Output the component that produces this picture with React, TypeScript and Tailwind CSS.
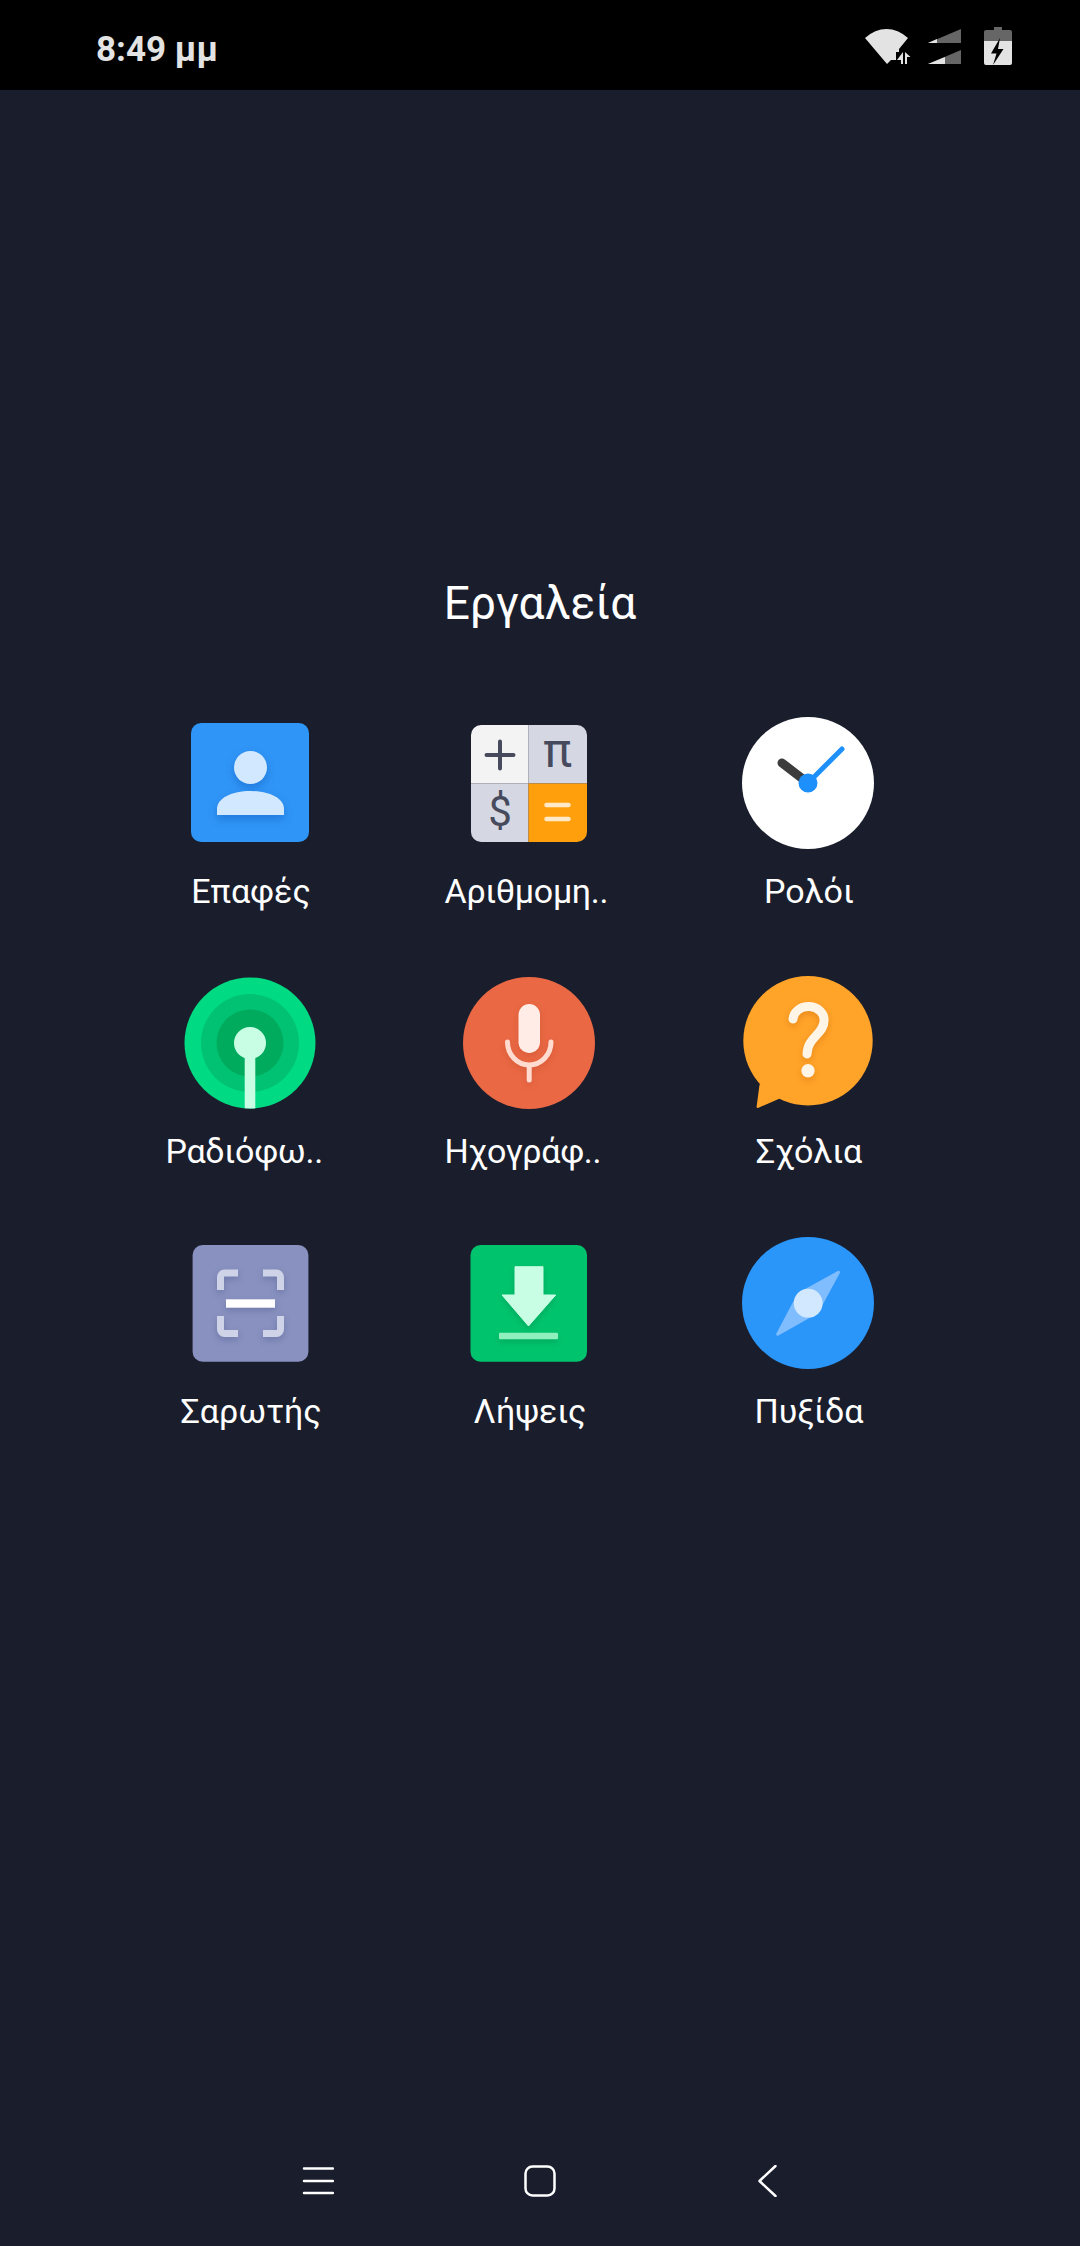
function ContactsIcon() {
  return (
    <svg width="132" height="132" viewBox="0 0 132 132">
      <rect x="7" y="6" width="118" height="119" rx="10" fill="#2f95f6" />
      <g className="drop-shadow-[0_4px_4px_rgba(0,60,160,0.3)]">
        <circle cx="66.5" cy="50.5" r="16.5" fill="#d2e8ff" />
        <path d="M33 98 V92 C33 81 48 74 66.5 74 S100 81 100 92 V98 Z" fill="#d2e8ff" />
      </g>
    </svg>
  );
}

function CalculatorIcon() {
  return (
    <svg width="132" height="132" viewBox="0 0 132 132">
      <path d="M65.5 8 H18 a10 10 0 0 0 -10 10 V66.5 H65.5 Z" fill="#f3f3f3" />
      <path d="M65.5 8 H114 a10 10 0 0 1 10 10 V66.5 H65.5 Z" fill="#d5d8e2" />
      <path d="M65.5 125 H18 a10 10 0 0 1 -10 -10 V66.5 H65.5 Z" fill="#d5d8e2" />
      <path d="M65.5 125 H114 a10 10 0 0 0 10 -10 V66.5 H65.5 Z" fill="#ff9f0c" />
      <path d="M23.5 38 H50.5 M37 24.5 V51.5" stroke="#464a5c" strokeWidth="4" strokeLinecap="round" />
      <text x="94.5" y="50" textAnchor="middle" fontSize="48" fontWeight="400" fill="#464a5c" className="font-['Roboto']">π</text>
      <text x="37" y="109" textAnchor="middle" fontSize="42" fontWeight="400" fill="#464a5c" className="font-['Roboto']">$</text>
      <path d="M83.5 88 H105.5 M83.5 102 H105.5" stroke="#ffe9c9" strokeWidth="4.5" strokeLinecap="round" />
    </svg>
  );
}

function ClockIcon() {
  return (
    <svg width="132" height="132" viewBox="0 0 132 132">
      <circle cx="66" cy="66" r="66" fill="#ffffff" />
      <path d="M66 66 L40 46" stroke="#3c3c3c" strokeWidth="9" strokeLinecap="round" />
      <path d="M66 66 L100 32" stroke="#1e90fb" strokeWidth="5" strokeLinecap="round" />
      <circle cx="66" cy="66" r="9.5" fill="#1e90fb" />
    </svg>
  );
}

function RadioIcon() {
  return (
    <svg width="132" height="132" viewBox="0 0 132 132">
      <defs>
        <clipPath id="radio-clip">
          <circle cx="66" cy="66" r="65.5" />
        </clipPath>
      </defs>
      <circle cx="66" cy="66" r="65.5" fill="#00da82" />
      <circle cx="66" cy="66" r="49" fill="#00c272" />
      <circle cx="66" cy="66" r="33.5" fill="#00ab5e" />
      <g clipPath="url(#radio-clip)">
        <rect x="60.7" y="66" width="10.6" height="66" fill="#c8ffe4" />
      </g>
      <circle cx="66" cy="66" r="16" fill="#c8ffe4" />
    </svg>
  );
}

function RecorderIcon() {
  return (
    <svg width="132" height="132" viewBox="0 0 132 132">
      <circle cx="66" cy="66" r="66" fill="#ea6844" />
      <g className="drop-shadow-[0_3px_3px_rgba(150,40,10,0.2)]">
        <rect x="55.5" y="27" width="21.5" height="49" rx="10.75" fill="#ffece6" />
        <path d="M44.5 65 a21.75 23 0 0 0 43.5 0 M66.2 88 V103" fill="none" stroke="#ffdccf" strokeWidth="5" strokeLinecap="round" />
      </g>
    </svg>
  );
}

function FeedbackIcon() {
  return (
    <svg className="overflow-visible" width="132" height="132" viewBox="0 0 132 132">
      <circle cx="66" cy="63.7" r="64.7" fill="#ffa329" />
      <path d="M18.5 108 L15.6 130 L38.6 120 Z" fill="#ffa329" stroke="#ffa329" strokeWidth="2" strokeLinejoin="round" />
      <g className="drop-shadow-[0_3px_3px_rgba(190,90,0,0.3)]">
        <path d="M51 42 a15.5 13.5 0 0 1 31 2 c0 13 -16.500 16 -17 33" fill="none" stroke="#fff5e6" strokeWidth="9" strokeLinecap="round" />
        <circle cx="66" cy="93.7" r="6.7" fill="#fff5e6" />
      </g>
    </svg>
  );
}

function ScannerIcon() {
  return (
    <svg width="132" height="132" viewBox="0 0 132 132">
      <rect x="8.6" y="8" width="115.8" height="116.7" rx="10" fill="#8891bf" />
      <g className="drop-shadow-[0_3px_3px_rgba(40,50,110,0.25)]">
        <path
          d="M36.500 53 V40 a4 4 0 0 1 4 -4 H54 M79 36 H92.500 a4 4 0 0 1 4 4 V53 M36.500 79 V92.500 a4 4 0 0 0 4 4 H54 M79 96.500 H92.500 a4 4 0 0 0 4 -4 V79"
          fill="none"
          stroke="#ced3e8"
          strokeWidth="7"
        />
        <rect x="42" y="62.3" width="49" height="8.4" fill="#ffffff" />
      </g>
    </svg>
  );
}

function DownloadsIcon() {
  return (
    <svg width="132" height="132" viewBox="0 0 132 132">
      <rect x="7.5" y="8" width="116.5" height="116.7" rx="10" fill="#00c46d" />
      <g className="drop-shadow-[0_3px_3px_rgba(0,90,50,0.25)]">
        <path d="M52 29.7 H80 V58 H92.7 L65.5 89 L39 58 H52 Z" fill="#c8ffe4" stroke="#c8ffe4" strokeLinejoin="round" />
        <rect x="36" y="95.7" width="59" height="6.5" rx="1" fill="#8ff0bd" />
      </g>
    </svg>
  );
}

function CompassIcon() {
  return (
    <svg width="132" height="132" viewBox="0 0 132 132">
      <circle cx="66" cy="66" r="66" fill="#2b96fa" />
      <path d="M96.500 35.300 L75 75 L35.700 97.300 L57 57 Z" fill="#80bdff" stroke="#80bdff" strokeWidth="3" strokeLinejoin="round" />
      <circle cx="66.2" cy="66.2" r="14.4" fill="#d2e8ff" />
    </svg>
  );
}

const apps = [
  { label: "Επαφές", icon: <ContactsIcon /> },
  { label: "Αριθμομη..", icon: <CalculatorIcon /> },
  { label: "Ρολόι", icon: <ClockIcon /> },
  { label: "Ραδιόφω..", icon: <RadioIcon /> },
  { label: "Ηχογράφ..", icon: <RecorderIcon /> },
  { label: "Σχόλια", icon: <FeedbackIcon /> },
  { label: "Σαρωτής", icon: <ScannerIcon /> },
  { label: "Λήψεις", icon: <DownloadsIcon /> },
  { label: "Πυξίδα", icon: <CompassIcon /> },
];

function StatusBar() {
  return (
    <div className="flex h-[90px] items-center bg-black pl-[96px] pr-[68px]">
      <span className="pt-[8px] text-[35px] leading-none font-bold text-[#e3e3e3]">8:49 μμ</span>
      <div className="ml-auto flex items-center pt-[2px]">
        <svg width="47" height="38" viewBox="865 27 47 38">
          <path d="M887 64 L865 38 Q875 29 886.500 29 Q898 29 908 38 L899 49 V52 H896 V60 H891 Z" fill="#e3e3e3" />
          <path d="M903 52 V64 H901 V60 H897 Z M905 52 L910.500 57 H907 V64 H905 Z" fill="#e3e3e3" />
        </svg>
        <svg className="ml-[16px]" width="33" height="38" viewBox="928 28 33 38">
          <path d="M928 44 L961 30 V44 Z" fill="#666666" />
          <path d="M928 44 L937 40 V44 Z" fill="#e3e3e3" />
          <path d="M928 65 L961 51 V65 Z" fill="#666666" />
          <path d="M928 65 L945 58 V65 Z" fill="#e3e3e3" />
        </svg>
        <svg className="ml-[23px]" width="28" height="39" viewBox="984 27 28 39">
          <path d="M994 27 H1002 V30 H1010 a2 2 0 0 1 2 2 V41 H984 V32 a2 2 0 0 1 2 -2 H994 Z" fill="#666666" />
          <path d="M984 41 H1012 V63 a2 2 0 0 1 -2 2 H986 a2 2 0 0 1 -2 -2 Z" fill="#e3e3e3" />
          <path d="M1000 38 L991 53.500 H996.500 L993 65 L1003.500 49 H998 Z" fill="#000000" />
        </svg>
      </div>
    </div>
  );
}

function NavBar() {
  return (
    <div className="mt-auto flex items-center pb-[49px] pl-[302px]">
      <svg width="32" height="32" viewBox="0 0 32 32">
        <path d="M2 3.500 H31 M2 16 H31 M2 28 H31" stroke="#ffffff" strokeWidth="2.500" strokeLinecap="round" />
      </svg>
      <svg className="ml-[190px]" width="32" height="32" viewBox="0 0 32 32">
        <rect x="1.500" y="1.500" width="29" height="29" rx="7" fill="none" stroke="#ffffff" strokeWidth="2.500" />
      </svg>
      <svg className="ml-[202px]" width="20" height="32" viewBox="0 0 20 32">
        <path d="M17.500 1 L1.500 16 L17.500 31" fill="none" stroke="#ffffff" strokeWidth="2.500" strokeLinecap="round" strokeLinejoin="round" />
      </svg>
    </div>
  );
}

export default function App() {
  return (
    <div className="flex h-[2246px] w-[1080px] flex-col bg-[#1a1e2c] font-['Roboto',sans-serif]">
      <StatusBar />
      <h1 className="mt-[480px] text-center text-[46px] leading-[66px] font-normal text-white">Εργαλεία</h1>
      <div className="mt-[81px] ml-[110px] grid grid-cols-[279px_279px_279px] gap-y-[66px]">
        {apps.map((app) => (
          <div key={app.label} className="flex flex-col items-center">
            {app.icon}
            <p
              className={
                app.label.endsWith("..")
                  ? "mt-[22px] w-[168px] text-left text-[34px] leading-[40px] tracking-[-0.3px] whitespace-nowrap text-white"
                  : "mt-[22px] w-[168px] pl-[3px] text-center text-[34px] leading-[40px] whitespace-nowrap text-white"
              }
            >
              {app.label}
            </p>
          </div>
        ))}
      </div>
      <NavBar />
    </div>
  );
}
